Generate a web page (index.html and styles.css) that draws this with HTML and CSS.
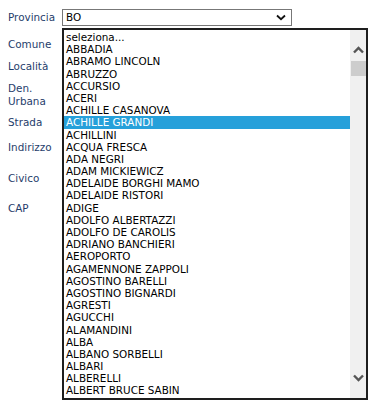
FILE: index.html
```html
<!DOCTYPE html>
<html lang="it">
<head>
    <meta charset="UTF-8">
    <title>Indirizzo</title>
    <link rel="stylesheet" href="styles.css">
</head>
<body>
    <div class="form">
        <div class="row r-prov">
            <label>Provincia</label>
            <div class="select">
                <span>BO</span>
                <svg width="10" height="7" viewBox="0 0 10 7"><path d="M1 1.5 L5 5.2 L9 1.5" fill="none" stroke="#111" stroke-width="1.8"/></svg>
            </div>
        </div>
        <div class="row r-com"><label>Comune</label></div>
        <div class="row r-loc"><label>Località</label></div>
        <div class="row r-den"><label>Den.<br>Urbana</label></div>
        <div class="row r-str"><label>Strada</label></div>
        <div class="row r-ind"><label>Indirizzo</label></div>
        <div class="row r-civ"><label>Civico</label></div>
        <div class="row r-cap"><label>CAP</label></div>

        <div class="listbox">
            <ul class="options">
                <li>seleziona...</li>
                <li>ABBADIA</li>
                <li>ABRAMO LINCOLN</li>
                <li>ABRUZZO</li>
                <li>ACCURSIO</li>
                <li>ACERI</li>
                <li>ACHILLE CASANOVA</li>
                <li class="selected">ACHILLE GRANDI</li>
                <li>ACHILLINI</li>
                <li>ACQUA FRESCA</li>
                <li>ADA NEGRI</li>
                <li>ADAM MICKIEWICZ</li>
                <li>ADELAIDE BORGHI MAMO</li>
                <li>ADELAIDE RISTORI</li>
                <li>ADIGE</li>
                <li>ADOLFO ALBERTAZZI</li>
                <li>ADOLFO DE CAROLIS</li>
                <li>ADRIANO BANCHIERI</li>
                <li>AEROPORTO</li>
                <li>AGAMENNONE ZAPPOLI</li>
                <li>AGOSTINO BARELLI</li>
                <li>AGOSTINO BIGNARDI</li>
                <li>AGRESTI</li>
                <li>AGUCCHI</li>
                <li>ALAMANDINI</li>
                <li>ALBA</li>
                <li>ALBANO SORBELLI</li>
                <li>ALBARI</li>
                <li>ALBERELLI</li>
                <li>ALBERT BRUCE SABIN</li>
            </ul>
            <div class="scrollbar">
                <svg class="arrow" width="15" height="10" viewBox="0 0 15 10"><path d="M3 7.5 L7.5 3 L12 7.5" fill="none" stroke="#555" stroke-width="2.4"/></svg>
                <div class="thumb"></div>
                <div class="track"></div>
                <svg class="arrow" width="15" height="10" viewBox="0 0 15 10"><path d="M3 2.5 L7.5 7 L12 2.5" fill="none" stroke="#555" stroke-width="2.4"/></svg>
            </div>
        </div>
    </div>
</body>
</html>
```

FILE: styles.css
```css
html, body {
    height: 100%;
}
body {
    margin: 0;
    font-family: "DejaVu Sans", Verdana, sans-serif;
    font-size: 10.4px;
    background: #fff;
    color: #000;
}
.form {
    position: relative;
    height: 100%;
    box-sizing: border-box;
    padding: 8px 0 0 8px;
}
.row {
    display: flex;
    align-items: flex-start;
}
.row label {
    width: 54px;
    line-height: 13px;
    color: #1f3d6b;
}
.r-prov { height: 19px; align-items: center; }
.r-com { height: 22px; padding-top: 11px; }
.r-loc { height: 22px; }
.r-den { height: 34px; }
.r-str { height: 25px; }
.r-ind { height: 31px; }
.r-civ { height: 30px; }
.r-cap { height: 20px; }
.select {
    width: 220px;
    height: 15px;
    border: 1px solid #777;
    display: flex;
    align-items: center;
    justify-content: space-between;
    padding: 0 5px 0 3px;
}
.select span {
    line-height: 15px;
}
.listbox {
    position: absolute;
    left: 62px;
    top: 28px;
    width: 302px;
    height: 368px;
    border: 2px solid #1e1e1e;
    display: flex;
    background: #fff;
}
.options {
    list-style: none;
    margin: 0;
    padding: 1px 0 0 0;
    flex: 1;
}
.options li {
    height: 12.2px;
    line-height: 12.2px;
    padding-left: 2px;
    white-space: nowrap;
}
.options li.selected {
    background: #26a0da;
    color: #fff;
}
.scrollbar {
    width: 16px;
    background: #f0f0f0;
    display: flex;
    flex-direction: column;
    align-items: center;
}
.scrollbar .arrow {
    margin: 15px 0 6px;
}
.scrollbar .arrow:last-child {
    margin: 6px 0 15px;
}
.thumb {
    width: 15px;
    height: 15px;
    background: #cdcdcd;
}
.track {
    flex: 1;
}
```
